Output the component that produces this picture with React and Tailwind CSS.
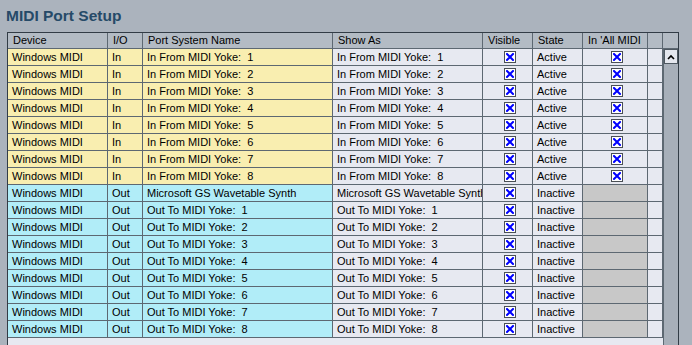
import React from "react"

const cols = [
  { key: "device", label: "Device", w: "w-[100px]" },
  { key: "io", label: "I/O", w: "w-[35px]" },
  { key: "port", label: "Port System Name", w: "w-[190px]" },
  { key: "show", label: "Show As", w: "w-[150px]" },
  { key: "visible", label: "Visible", w: "w-[50px]" },
  { key: "state", label: "State", w: "w-[50px]" },
  { key: "all", label: "In 'All MIDI", w: "w-[65px]" },
  { key: "extra", label: "", w: "w-[15px]" },
]

const rows = [
  ...[1, 2, 3, 4, 5, 6, 7, 8].map(n => ({ io: "In", name: `In From MIDI Yoke:  ${n}`, state: "Active", all: true })),
  { io: "Out", name: "Microsoft GS Wavetable Synth", state: "Inactive", all: false },
  ...[1, 2, 3, 4, 5, 6, 7, 8].map(n => ({ io: "Out", name: `Out To MIDI Yoke:  ${n}`, state: "Inactive", all: false })),
]

function Check() {
  return (
    <span className="flex h-[12px] w-[12px] items-center justify-center border border-[#4a4f55] bg-white">
      <svg width="8" height="8" viewBox="0 0 8 8">
        <path d="M1 1 L7 7 M7 1 L1 7" stroke="#0000ff" strokeWidth="2" strokeLinecap="square" fill="none" />
      </svg>
    </span>
  )
}

function Cell({ w, bg, children, center }) {
  return (
    <div className={`${w} ${bg} h-[17px] shrink-0 overflow-hidden whitespace-pre border-r border-b border-[#5d6872] pl-[4px] leading-[16px] ${center ? "flex items-center justify-center pl-0" : ""}`}>
      {children}
    </div>
  )
}

export default function App() {
  return (
    <div className="flex h-[345px] w-[692px] flex-col overflow-hidden bg-[#abb3bd] text-[11px] text-black" style={{ fontFamily: '"Liberation Sans", Arial, sans-serif' }}>
      <div className="h-[32px] shrink-0 pl-[6px] pt-[6px] text-[15.5px] font-bold leading-[20px] text-[#264a68]">MIDI Port Setup</div>
      <div className="ml-[7px] flex w-[672px] flex-1 flex-col border-l border-t border-r border-[#323c46]">
        <div className="flex h-[16px] shrink-0 border-b border-[#5d6872] bg-[#b3bbc4]">
          {cols.map(c => (
            <div key={c.key} className={`${c.w} h-[15px] shrink-0 overflow-hidden whitespace-nowrap border-r border-[#5d6872] pl-[5px] leading-[15px]`}>{c.label}</div>
          ))}
          <div className="w-[15px] shrink-0" />
        </div>
        <div className="flex flex-1">
          <div className="w-[655px] shrink-0 bg-[#e7e9f1]">
            {rows.map((r, i) => {
              const side = r.io === "In" ? "bg-[#f9eeb0]" : "bg-[#b1edf8]"
              return (
                <div key={i} className="flex">
                  <Cell w="w-[100px]" bg={side}>Windows MIDI</Cell>
                  <Cell w="w-[35px]" bg={side}>{r.io}</Cell>
                  <Cell w="w-[190px]" bg={side}>{r.name}</Cell>
                  <Cell w="w-[150px]" bg="bg-[#e7e9f1]">{r.name}</Cell>
                  <Cell w="w-[50px]" bg="bg-[#e7e9f1]" center><Check /></Cell>
                  <Cell w="w-[50px]" bg="bg-[#e7e9f1]">{r.state}</Cell>
                  <Cell w="w-[65px]" bg={r.all ? "bg-[#e7e9f1]" : "bg-[#c8c8c8]"} center>{r.all && <Check />}</Cell>
                  <Cell w="w-[15px]" bg="bg-[#e7e9f1]" />
                </div>
              )
            })}
          </div>
          <div className="flex w-[15px] shrink-0 flex-col border-l border-[#5d6872] bg-[#a7afb9]">
            <div className="flex h-[15px] items-center justify-center border border-[#4e5861] bg-[#e4e7ee]">
              <svg width="8" height="6" viewBox="0 0 8 6">
                <path d="M1 5 L4 2 L7 5" stroke="#000" strokeWidth="1.6" fill="none" />
              </svg>
            </div>
          </div>
        </div>
      </div>
    </div>
  )
}
